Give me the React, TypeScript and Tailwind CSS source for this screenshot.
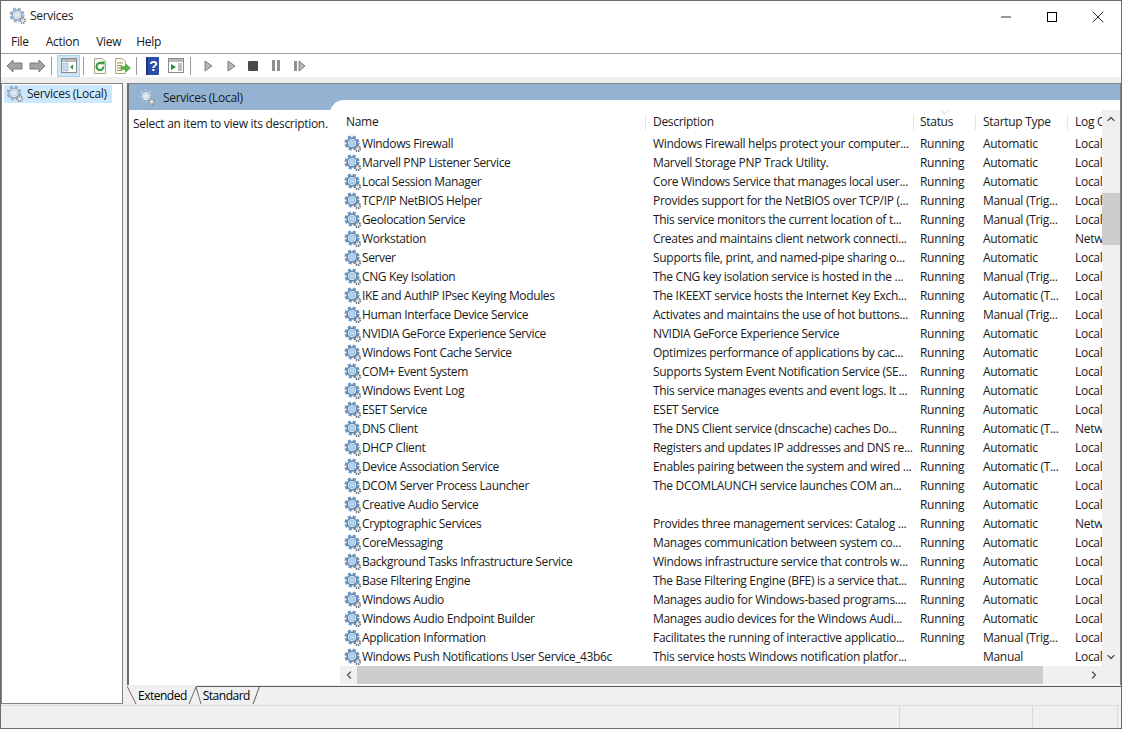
import type { ReactNode } from 'react'
import { ChevronDown, ChevronLeft, ChevronRight, ChevronUp, Minus, X } from 'lucide-react'

const rows = [
  ['Windows Firewall', 'Windows Firewall helps protect your computer...', 'Running', 'Automatic', 'Local Service'],
  ['Marvell PNP Listener Service', 'Marvell Storage PNP Track Utility.', 'Running', 'Automatic', 'Local System'],
  ['Local Session Manager', 'Core Windows Service that manages local user...', 'Running', 'Automatic', 'Local System'],
  ['TCP/IP NetBIOS Helper', 'Provides support for the NetBIOS over TCP/IP (...', 'Running', 'Manual (Trig...', 'Local Service'],
  ['Geolocation Service', 'This service monitors the current location of t...', 'Running', 'Manual (Trig...', 'Local System'],
  ['Workstation', 'Creates and maintains client network connecti...', 'Running', 'Automatic', 'Network Service'],
  ['Server', 'Supports file, print, and named-pipe sharing o...', 'Running', 'Automatic', 'Local System'],
  ['CNG Key Isolation', 'The CNG key isolation service is hosted in the ...', 'Running', 'Manual (Trig...', 'Local System'],
  ['IKE and AuthIP IPsec Keying Modules', 'The IKEEXT service hosts the Internet Key Exch...', 'Running', 'Automatic (T...', 'Local System'],
  ['Human Interface Device Service', 'Activates and maintains the use of hot buttons...', 'Running', 'Manual (Trig...', 'Local System'],
  ['NVIDIA GeForce Experience Service', 'NVIDIA GeForce Experience Service', 'Running', 'Automatic', 'Local System'],
  ['Windows Font Cache Service', 'Optimizes performance of applications by cac...', 'Running', 'Automatic', 'Local Service'],
  ['COM+ Event System', 'Supports System Event Notification Service (SE...', 'Running', 'Automatic', 'Local Service'],
  ['Windows Event Log', 'This service manages events and event logs. It ...', 'Running', 'Automatic', 'Local Service'],
  ['ESET Service', 'ESET Service', 'Running', 'Automatic', 'Local System'],
  ['DNS Client', 'The DNS Client service (dnscache) caches Do...', 'Running', 'Automatic (T...', 'Network Service'],
  ['DHCP Client', 'Registers and updates IP addresses and DNS re...', 'Running', 'Automatic', 'Local Service'],
  ['Device Association Service', 'Enables pairing between the system and wired ...', 'Running', 'Automatic (T...', 'Local System'],
  ['DCOM Server Process Launcher', 'The DCOMLAUNCH service launches COM an...', 'Running', 'Automatic', 'Local System'],
  ['Creative Audio Service', '', 'Running', 'Automatic', 'Local System'],
  ['Cryptographic Services', 'Provides three management services: Catalog ...', 'Running', 'Automatic', 'Network Service'],
  ['CoreMessaging', 'Manages communication between system co...', 'Running', 'Automatic', 'Local Service'],
  ['Background Tasks Infrastructure Service', 'Windows infrastructure service that controls w...', 'Running', 'Automatic', 'Local System'],
  ['Base Filtering Engine', 'The Base Filtering Engine (BFE) is a service that...', 'Running', 'Automatic', 'Local Service'],
  ['Windows Audio', 'Manages audio for Windows-based programs....', 'Running', 'Automatic', 'Local Service'],
  ['Windows Audio Endpoint Builder', 'Manages audio devices for the Windows Audi...', 'Running', 'Automatic', 'Local System'],
  ['Application Information', 'Facilitates the running of interactive applicatio...', 'Running', 'Manual (Trig...', 'Local System'],
  ['Windows Push Notifications User Service_43b6c', 'This service hosts Windows notification platfor...', '', 'Manual', 'Local System'],
]

function Gear({ faded }: { faded?: boolean }) {
  return (
    <svg width="18" height="18" viewBox="0 0 18 18" className="shrink-0">
      <circle cx="8" cy="8" r="6.2" fill="#e4eef7" stroke={faded ? '#9fb3c6' : '#6f96bd'} strokeWidth="2.8" strokeDasharray="3 1.87" />
      <circle cx="8" cy="8" r="4.8" fill="#f2f7fb" stroke={faded ? '#8fa9c2' : '#5a86b3'} strokeWidth="1.4" />
      <circle cx="8" cy="8" r="3" fill={faded ? '#dfeaf4' : '#b7d3ec'} stroke={faded ? '#b6c7d6' : '#8fb2d2'} strokeWidth="0.8" />
      <circle cx="13.7" cy="13.7" r="2.5" fill="#e6e6e6" stroke={faded ? '#7f8c98' : '#5f6d7a'} strokeWidth="1.8" strokeDasharray="1.300 0.9" />
    </svg>
  )
}

function Arrow({ left }: { left?: boolean }) {
  return (
    <svg width="17" height="14" viewBox="0 0 17 14">
      <path d={left ? 'M1 7 7 1v3h9v6H7v3z' : 'M16 7 10 1v3H1v6h9v3z'} fill="#a3a3a3" stroke="#7b7b7b" />
    </svg>
  )
}

function Sep() {
  return <div className="h-[18px] w-px bg-[#9a9a9a]" />
}

function Pane() {
  return (
    <svg width="16" height="15" viewBox="0 0 16 15">
      <rect x="0.5" y="0.5" width="15" height="14" fill="#fff" stroke="#8a8a8a" />
      <rect x="1" y="1" width="14" height="3" fill="#b9b9b9" />
      <rect x="2" y="5" width="5" height="8" fill="#c4dcec" stroke="#8aa4b8" strokeWidth="0.5" />
      <path d="M12 6.5v5L9 9z" fill="#2f8f3a" />
    </svg>
  )
}

function Toolbar() {
  return (
    <div className="flex h-[23px] shrink-0 items-center bg-white pl-[5px]">
      <Arrow left />
      <div className="ml-[6px]"><Arrow /></div>
      <div className="ml-[5px]"><Sep /></div>
      <div className="ml-[5px] flex h-[22px] w-[23px] items-center justify-center border border-[#a8d4f2] bg-[#cce6f8]"><Pane /></div>
      <div className="ml-[3px]"><Sep /></div>
      <svg width="16" height="16" viewBox="0 0 16 16" className="ml-[8px]">
        <path d="M2.5.5h8l3 3v12h-11z" fill="#fbfbf2" stroke="#a5a58c" />
        <path d="M11.5 8.5a3.5 3.5 0 1 1-1.2-2.6" fill="none" stroke="#2f9a3a" strokeWidth="2" />
        <path d="M8.5 3.5h4v4z" fill="#2f9a3a" />
      </svg>
      <svg width="17" height="16" viewBox="0 0 17 16" className="ml-[6px]">
        <path d="M1.5.5h7l3 3v12h-10z" fill="#fbfbe8" stroke="#b0a878" />
        <path d="M3 5h6M3 7.5h5M3 10h4M3 12.5h5" stroke="#8f8f70" />
        <path d="M7 8.500h5V6l4.500 4-4.500 4v-2.500H7z" fill="#58b947" stroke="#3c8f33" strokeWidth="0.5" />
      </svg>
      <div className="ml-[5px]"><Sep /></div>
      <svg width="13" height="18" viewBox="0 0 13 18" className="ml-[9px]">
        <rect x="0" y="0" width="13" height="18" rx="1" fill="#2b4ea8" />
        <rect x="0" y="0" width="2" height="18" fill="#1c3478" />
        <text x="7.500" y="14" textAnchor="middle" fontSize="14" fontWeight="700" fill="#fff" fontFamily="Liberation Sans, sans-serif">?</text>
      </svg>
      <svg width="16" height="15" viewBox="0 0 16 15" className="ml-[9px]">
        <rect x="0.5" y="0.5" width="15" height="14" fill="#fff" stroke="#8a8a8a" />
        <rect x="1" y="1" width="14" height="3" fill="#b9b9b9" />
        <path d="M3 6v6l5-3z" fill="#2f8f3a" />
        <path d="M10 6h4M10 8h4M10 10h4M10 12h4" stroke="#7c7c7c" />
      </svg>
      <div className="ml-[6px]"><Sep /></div>
      <svg width="9" height="12" viewBox="0 0 9 12" className="ml-[13px]"><path d="M1 1v10l7-5z" fill="#b5b5b5" stroke="#7f7f7f" /></svg>
      <svg width="9" height="12" viewBox="0 0 9 12" className="ml-[14px]"><path d="M1 1v10l7-5z" fill="#b5b5b5" stroke="#7f7f7f" /></svg>
      <div className="ml-[12px] h-[10px] w-[10px] rounded-[1px] bg-[#4a4a4a]" />
      <div className="ml-[14px] flex gap-[2px]">
        <div className="h-[11px] w-[3px] bg-[#8f8f8f]" />
        <div className="h-[11px] w-[3px] bg-[#8f8f8f]" />
      </div>
      <svg width="12" height="12" viewBox="0 0 12 12" className="ml-[14px]">
        <rect x="0" y="1" width="3" height="10" fill="#8f8f8f" />
        <path d="M5 1v10l6-5z" fill="#b5b5b5" stroke="#7f7f7f" />
      </svg>
    </div>
  )
}

function Cols({ name, desc, status, start, log, header }: { name: ReactNode; desc: string; status: string; start: string; log: string; header?: boolean }) {
  const line = header ? 'border-r border-[#e5e5e5] ' : ''
  return (
    <>
      <div className={line + 'w-[302px] shrink-0 overflow-hidden whitespace-nowrap'}>{name}</div>
      <div className={line + 'w-[268px] shrink-0 overflow-hidden whitespace-nowrap pl-[7px]'}>{desc}</div>
      <div className={line + 'w-[62px] shrink-0 overflow-hidden whitespace-nowrap pl-[6px]'}>{status}</div>
      <div className={line + 'w-[92px] shrink-0 overflow-hidden whitespace-nowrap pl-[7px]'}>{start}</div>
      <div className="w-[34px] shrink-0 overflow-hidden whitespace-nowrap pl-[7px]">{log}</div>
    </>
  )
}

function Tabs() {
  return (
    <div className="flex h-[20px] shrink-0">
      <div className="relative w-[133px] shrink-0">
        <svg width="133" height="20" viewBox="0 0 133 20" className="absolute left-0 top-0">
          <path d="M0 1 9 19M62 19 69 2M69 2l5 17" fill="none" stroke="#6b6b6b" />
          <path d="M69 1.500h64M132.500 1.500 126 19" fill="none" stroke="#5a5a5a" />
        </svg>
        <div className="relative flex h-[20px] items-center pt-[2px] tracking-[-0.5px] text-black">
          <span className="ml-[11px]">Extended</span>
          <span className="ml-[16px]">Standard</span>
        </div>
      </div>
      <div className="mt-px h-px flex-1 bg-[#5a5a5a]" />
    </div>
  )
}

export default function App() {
  return (
    <div className="flex h-[729px] w-[1122px] flex-col overflow-hidden border border-[#6b6b6b] bg-white text-[12px] leading-[16px] tracking-[-0.3px] text-[#1a1a1a] [font-family:'Open_Sans',sans-serif]">
      <div className="flex h-[29px] shrink-0 items-center pl-[8px]">
        <Gear faded />
        <span className="ml-[3px]">Services</span>
        <div className="ml-auto flex h-[16px] items-center pt-[2px]">
          <div className="flex w-[46px] justify-center"><Minus size={16} strokeWidth={1.2} color="#000" /></div>
          <div className="flex w-[46px] justify-center"><div className="h-[10px] w-[10px] border border-black" /></div>
          <div className="flex w-[46px] justify-center"><X size={20} strokeWidth={1} color="#000" /></div>
        </div>
      </div>
      <div className="flex h-[23px] shrink-0 items-center pl-[10px] text-[#1a1a1a]">
        <span>File</span>
        <span className="ml-[17px]">Action</span>
        <span className="ml-[17px]">View</span>
        <span className="ml-[15px]">Help</span>
      </div>
      <div className="h-px shrink-0 bg-[#a0a0a0]" />
      <Toolbar />
      <div className="flex min-h-0 flex-1 bg-[#f0f0f0] pt-[6px]">
        <div className="mb-px w-[122px] shrink-0 border border-[#828282] bg-white px-[2px] pt-px">
          <div className="flex h-[18px] w-[108px] items-center bg-[#cce8ff] pl-[2px]">
            <Gear faded />
            <span className="ml-[3px] whitespace-nowrap">Services (Local)</span>
          </div>
        </div>
        <div className="ml-[4px] flex min-w-0 flex-1 flex-col">
          <div className="flex min-h-0 flex-1 flex-col border-x border-t border-[#828282] border-l-[2px] border-l-[#6b6b6b] bg-white">
            <div className="flex h-[26px] shrink-0 items-start bg-[#94b3d2] pl-[9px] pt-[4px]">
              <Gear faded />
              <span className="ml-[7px] pt-[2px]">Services (Local)</span>
            </div>
            <div className="flex min-h-0 flex-1">
              <div className="w-[201px] shrink-0 whitespace-nowrap pl-[4px] pt-[6px]">Select an item to view its description.</div>
              <div className="-mt-[10px] flex min-w-0 flex-1 flex-col rounded-tl-[14px] bg-white">
                <div className="flex min-h-0 flex-1 pl-[10px]">
                  <div className="w-[762px] shrink-0 overflow-hidden">
                    <div className="flex h-[34px] items-center pl-[4px] pt-[9px]">
                      <div className="relative flex h-[22px] items-center">
                        <Cols header name={<span className="pl-[2px]">Name</span>} desc="Description" status="Status" start="Startup Type" log="Log On As" />
                        <ChevronDown size={11} strokeWidth={1} color="#8a8a8a" className="absolute left-[595px] -top-[4px]" />
                      </div>
                    </div>
                    {rows.map(r => (
                      <div key={r[0]} className="flex h-[19px] items-center pl-[4px]">
                        <Cols
                          name={<div className="flex items-center"><Gear /><span className="tracking-[-0.37px]">{r[0]}</span></div>}
                          desc={r[1]}
                          status={r[2]}
                          start={r[3]}
                          log={r[4]}
                        />
                      </div>
                    ))}
                  </div>
                  <div className="mt-[10px] flex w-[18px] shrink-0 flex-col items-center bg-[#f0f0f0]">
                    <div className="flex h-[18px] items-center"><ChevronUp size={12} strokeWidth={2.5} color="#505050" /></div>
                    <div className="mt-[65px] h-[52px] w-full bg-[#cdcdcd]" />
                    <div className="mt-auto flex h-[18px] items-center"><ChevronDown size={12} strokeWidth={2.5} color="#505050" /></div>
                  </div>
                </div>
                <div className="ml-[10px] flex h-[18px] shrink-0 items-center bg-[#f0f0f0]">
                  <div className="flex w-[17px] justify-center"><ChevronLeft size={12} strokeWidth={2.5} color="#505050" /></div>
                  <div className="h-full w-[686px] bg-[#cdcdcd]" />
                  <div className="ml-auto mr-[18px] flex w-[17px] justify-center"><ChevronRight size={12} strokeWidth={2.5} color="#505050" /></div>
                </div>
                <div className="h-px shrink-0" />
              </div>
            </div>
          </div>
          <Tabs />
        </div>
      </div>
      <div className="flex h-[23px] shrink-0 border-t border-[#dcdcdc] bg-[#f0f0f0]">
        <div className="w-[899px] border-r border-[#d9d9d9]" />
        <div className="w-[133px] border-r border-[#d9d9d9]" />
        <div className="w-[85px] border-r border-[#d9d9d9]" />
      </div>
    </div>
  )
}
